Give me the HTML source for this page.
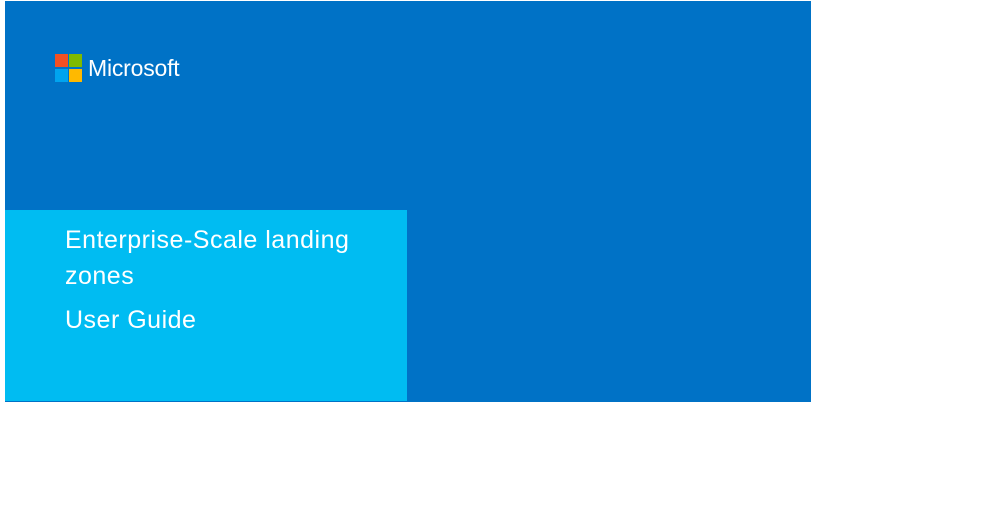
<!DOCTYPE html>
<html><head><style>
html,body{margin:0;padding:0;background:#fff;width:1008px;height:513px;overflow:hidden;position:relative;font-family:"Liberation Sans",sans-serif}
.blue{position:absolute;left:5px;top:1px;width:806px;height:401px;background:#0072c6}
.light{position:absolute;left:5px;top:210px;width:402px;height:191px;background:#00bcf2}
.sq{position:absolute;width:13px;height:13px}
.ms{position:absolute;left:88px;top:55px;color:#fff;font-size:23px;letter-spacing:-0.2px}
.t{position:absolute;left:65px;color:#fff;font-size:25px;letter-spacing:0.5px;white-space:nowrap}
</style></head><body>
<div class="blue"></div>
<div class="light"></div>
<div class="sq" style="left:55px;top:54px;background:#f25022"></div>
<div class="sq" style="left:69px;top:54px;background:#7fba00"></div>
<div class="sq" style="left:55px;top:69px;background:#00a4ef"></div>
<div class="sq" style="left:69px;top:69px;background:#ffb900"></div>
<div class="ms">Microsoft</div>
<div class="t" style="top:226px">Enterprise-Scale landing</div>
<div class="t" style="top:262px">zones</div>
<div class="t" style="top:306px">User Guide</div>
</body></html>
